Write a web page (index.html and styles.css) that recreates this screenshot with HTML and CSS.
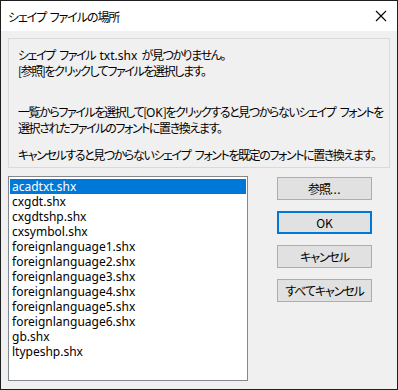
FILE: index.html
```html
<!DOCTYPE html>
<html lang="ja">
<head>
<meta charset="utf-8">
<link rel="stylesheet" href="styles.css">
</head>
<body>
<div class="window">
  <div class="titlebar">
    <span class="title">シェイプ ファイルの場所</span>
    <svg class="close" width="12" height="12" viewBox="0 0 12 12"><path d="M1 1 L11 11 M11 1 L1 11" stroke="#000" stroke-width="1.1" fill="none"/></svg>
  </div>
  <div class="content">
    <div class="info">
      <p>シェイプ ファイル <span class="latin">txt.shx</span> が見つかりません。<br>[参照]をクリックしてファイルを選択します。</p>
      <p class="gap2">一覧からファイルを選択して[<span class="latin">OK</span>]をクリックすると見つからないシェイプ フォントを<br>選択されたファイルのフォントに置き換えます。</p>
      <p>キャンセルすると見つからないシェイプ フォントを既定のフォントに置き換えます。</p>
    </div>
    <div class="lower">
      <div class="list">
        <div class="item selected">acadtxt.shx</div>
        <div class="item">cxgdt.shx</div>
        <div class="item">cxgdtshp.shx</div>
        <div class="item">cxsymbol.shx</div>
        <div class="item">foreignlanguage1.shx</div>
        <div class="item">foreignlanguage2.shx</div>
        <div class="item">foreignlanguage3.shx</div>
        <div class="item">foreignlanguage4.shx</div>
        <div class="item">foreignlanguage5.shx</div>
        <div class="item">foreignlanguage6.shx</div>
        <div class="item">gb.shx</div>
        <div class="item">ltypeshp.shx</div>
      </div>
      <div class="buttons">
        <button class="btn">参照<span class="dots">...</span></button>
        <button class="btn default">OK</button>
        <button class="btn">キャンセル</button>
        <button class="btn">すべてキャンセル</button>
      </div>
    </div>
  </div>
</div>
</body>
</html>
```
FILE: styles.css
```css
html, body {
  margin: 0;
  padding: 0;
  background: #fff;
}
.window {
  width: 398px;
  height: 390px;
  box-sizing: border-box;
  border: 1px solid #1e1e1e;
  display: flex;
  flex-direction: column;
  font-family: "Noto Sans CJK JP", "Noto Sans", sans-serif;
  font-size: 12px;
  color: #000;
  font-feature-settings: "palt";
}
.titlebar {
  height: 30px;
  background: #fff;
  display: flex;
  align-items: center;
  justify-content: space-between;
  padding: 0 10px 0 7px;
}
.title {
  font-size: 12px;
  letter-spacing: -1.1px;
  word-spacing: 2px;
}
.close {
  display: block;
}
.content {
  flex: 1;
  background: #f0f0f0;
  padding: 7px 7px 8px 7px;
  display: flex;
  flex-direction: column;
  gap: 8px;
}
.info {
  height: 130px;
  box-sizing: border-box;
  border: 1px solid #dadada;
  padding: 8px 9px;
  line-height: 15px;
  letter-spacing: -1.4px;
  word-spacing: 3px;
  white-space: nowrap;
}
.info .latin {
  letter-spacing: 0;
  font-family: "Noto Sans", sans-serif;
}
.info p {
  margin: 0 0 12px 0;
}
.info p.gap2 {
  margin-top: 26px;
}
.lower {
  flex: 1;
  display: flex;
}
.list {
  width: 240px;
  box-sizing: border-box;
  border: 1px solid #828790;
  background: #fff;
  padding: 2px 1px;
  font-family: "Noto Sans", sans-serif;
  font-size: 12px;
  line-height: 15px;
  color: #000;
}
.item {
  padding-left: 2px;
  height: 15px;
}
.item.selected {
  background: #0078d7;
  color: #fff;
}
.buttons {
  margin-left: 29px;
  padding-top: 1px;
  display: flex;
  flex-direction: column;
  gap: 11px;
}
.btn {
  width: 95px;
  height: 23px;
  box-sizing: border-box;
  border: 1px solid #adadad;
  background: #e1e1e1;
  font-family: "Noto Sans CJK JP", "Noto Sans", sans-serif;
  font-size: 12px;
  letter-spacing: -1.1px;
  color: #000;
  padding: 0;
  margin: 0;
  font-feature-settings: "palt";
}
.btn .dots {
  font-family: "Noto Sans", sans-serif;
  letter-spacing: 0.5px;
}
.btn.default {
  border: 2px solid #0078d7;
  letter-spacing: 0;
}
```
